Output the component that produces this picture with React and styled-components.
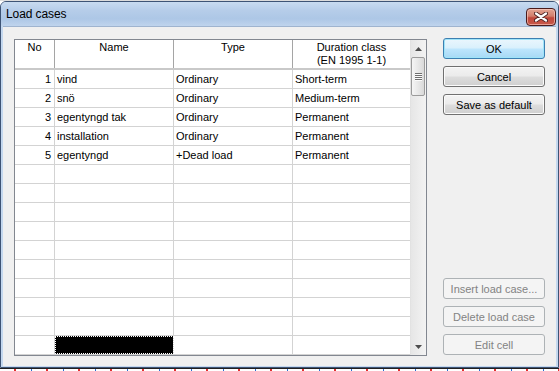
import React from 'react';
import styled, {createGlobalStyle, css} from 'styled-components';

const GlobalStyle = createGlobalStyle`
  html, body {
    margin: 0;
    padding: 0;
    background: #ffffff;
  }
  body {
    font-family: "Liberation Sans", "DejaVu Sans", Arial, sans-serif;
    font-size: 11px;
    color: #000;
  }
`;

const rows = [
  {no: 1, name: 'vind', type: 'Ordinary', duration: 'Short-term'},
  {no: 2, name: 'snö', type: 'Ordinary', duration: 'Medium-term'},
  {no: 3, name: 'egentyngd tak', type: 'Ordinary', duration: 'Permanent'},
  {no: 4, name: 'installation', type: 'Ordinary', duration: 'Permanent'},
  {no: 5, name: 'egentyngd', type: '+Dead load', duration: 'Permanent'},
];
const TOTAL_ROWS = 15;
const COLUMNS = '40px 119px 119px 118px';

const Desktop = styled.div`
  width: 559px;
  height: 371px;
  display: flex;
  flex-direction: column;
  background: linear-gradient(#dcdcdc 0, #dcdcdc 1px, #fff 1px);
  padding-top: 1px;
  box-sizing: border-box;
  overflow: hidden;
`;

const Window = styled.div`
  display: flex;
  flex-direction: column;
  height: 367px;
  box-sizing: border-box;
  border: 1px solid #3e5475;
  border-radius: 6px 6px 0 0;
  padding: 0 2px 1px;
  background: #c4d8ef;
`;

const TitleBar = styled.div`
  height: 24px;
  display: flex;
  align-items: center;
  justify-content: space-between;
  padding: 0 2px 0 5px;
  margin: 0 -2px;
  border-radius: 5px 5px 0 0;
  background: linear-gradient(#c8dbf0 0%, #b6cde9 35%, #adc7e6 70%, #bfd4ed 100%);
`;

const Title = styled.span`
  font-size: 12px;
  color: #000;
  letter-spacing: -0.1px;
`;

const CloseButton = styled.div`
  width: 30px;
  height: 18px;
  margin-top: 5px;
  box-sizing: border-box;
  border: 1px solid #4a1c1c;
  border-radius: 4px;
  background: linear-gradient(#e3a594 0%, #d27e6c 45%, #c0483c 55%, #c8594a 100%);
  display: flex;
  align-items: center;
  justify-content: center;
  box-shadow: inset 0 0 0 1px rgba(255, 210, 200, 0.6);
`;

const Client = styled.div`
  flex: 1;
  display: flex;
  gap: 16px;
  padding: 11px 11px 10px 11px;
  background: #f0f0f0;
  border-top: 1px solid #9fb4cf;
`;

const Grid = styled.div`
  margin-top: 1px;
  width: 413px;
  height: 317px;
  box-sizing: border-box;
  border: 1px solid #828790;
  display: flex;
  background: #fff;
`;

const Table = styled.div`
  width: 396px;
  display: flex;
  flex-direction: column;
  overflow: hidden;
`;

const HeaderRow = styled.div`
  display: grid;
  grid-template-columns: ${COLUMNS};
  height: 28px;
  border-bottom: 2px solid #c9c9c9;
  background: #fff;
`;

const HeaderCell = styled.div`
  text-align: center;
  line-height: 13px;
  padding-top: 1px;
  border-right: 1px solid ${p => (p.$last ? 'transparent' : '#a5a5a5')};
`;

const Row = styled.div`
  display: grid;
  grid-template-columns: ${COLUMNS};
  height: 19px;
  box-sizing: border-box;
  border-bottom: 1px solid #d3d3d3;
  flex-shrink: 0;
`;

const Cell = styled.div`
  line-height: 18px;
  padding: 0 2px;
  white-space: nowrap;
  overflow: hidden;
  border-right: 1px solid ${p => (p.$last ? 'transparent' : '#d3d3d3')};
  text-align: ${p => (p.$right ? 'right' : 'left')};
  ${p => p.$right && css`padding-right: 3px;`}
  ${p =>
    p.$selected &&
    css`
      background: #000;
      outline: 1px dotted #fff;
      outline-offset: -1px;
    `}
`;

const Scrollbar = styled.div`
  width: 15px;
  display: flex;
  flex-direction: column;
  background: linear-gradient(90deg, #e6e6e6, #f3f3f3);
  border-left: 1px solid #e2e2e2;
`;

const ArrowButton = styled.div`
  height: 17px;
  display: flex;
  align-items: center;
  justify-content: center;
`;

const Track = styled.div`
  flex: 1;
`;

const Thumb = styled.div`
  height: 39px;
  margin: 0 1px 0 0;
  box-sizing: border-box;
  border: 1px solid #9b9b9b;
  border-radius: 2px;
  background: linear-gradient(90deg, #f5f5f5 0%, #e8e8e8 50%, #d9d9d9 100%);
  display: flex;
  flex-direction: column;
  align-items: center;
  justify-content: center;
  gap: 1px;
`;

const Grip = styled.div`
  width: 7px;
  height: 1px;
  background: #6e6e6e;
  box-shadow: 0 1px 0 #fbfbfb;
`;

const ButtonColumn = styled.div`
  width: 102px;
  display: flex;
  flex-direction: column;
  justify-content: space-between;
  padding-bottom: 1px;
`;

const ButtonGroup = styled.div`
  display: flex;
  flex-direction: column;
  gap: 7px;
`;

const Button = styled.div`
  height: 21px;
  box-sizing: border-box;
  border: 1px solid #707070;
  border-radius: 3px;
  display: flex;
  align-items: center;
  justify-content: center;
  font-size: 11px;
  color: #000;
  background: linear-gradient(#f3f3f3 0%, #ebebeb 48%, #dddddd 52%, #cfcfcf 100%);
  box-shadow: inset 0 0 0 1px #fbfbfb;
  ${p =>
    p.$default &&
    css`
      border-color: #3c7fb1;
      background: linear-gradient(#eaf6fd 0%, #d9f0fc 48%, #bee6fd 52%, #a7d9f5 100%);
      box-shadow: inset 0 0 0 1px #9fe4f9;
    `}
  ${p =>
    p.$disabled &&
    css`
      border-color: #adb2b5;
      background: #f4f4f4;
      color: #838383;
      box-shadow: none;
    `}
`;

const Strip = styled.div`
  flex: 1;
  border-top: 1px solid #202020;
  background: repeating-linear-gradient(90deg, #fff 0 14px, #e03030 14px 16px, #fff 16px 31px, #2a6ad0 31px 32px);
`;

const CloseIcon = () => (
  <svg width="14" height="10" viewBox="0 0 14 10">
    <path d="M2 1.5 L12 8.5 M12 1.5 L2 8.5" stroke="#4b2222" strokeWidth="4" strokeLinecap="round" />
    <path d="M2 1.5 L12 8.5 M12 1.5 L2 8.5" stroke="#ffffff" strokeWidth="2.2" strokeLinecap="round" />
  </svg>
);

const Arrow = ({down}) => (
  <svg width="7" height="4" viewBox="0 0 7 4">
    <path d={down ? 'M0 0 H7 L3.5 4 Z' : 'M0 4 H7 L3.5 0 Z'} fill="#4d4d4d" />
  </svg>
);

export default function App() {
  const bodyRows = Array.from({length: TOTAL_ROWS}, (_, i) => rows[i] || null);

  return (
    <>
      <GlobalStyle />
      <Desktop>
        <Window>
          <TitleBar>
            <Title>Load cases</Title>
            <CloseButton>
              <CloseIcon />
            </CloseButton>
          </TitleBar>
          <Client>
            <Grid>
              <Table>
                <HeaderRow>
                  <HeaderCell>No</HeaderCell>
                  <HeaderCell>Name</HeaderCell>
                  <HeaderCell>Type</HeaderCell>
                  <HeaderCell $last>
                    Duration class
                    <br />
                    (EN 1995 1-1)
                  </HeaderCell>
                </HeaderRow>
                {bodyRows.map((r, i) => (
                  <Row key={i}>
                    <Cell $right>{r ? r.no : ''}</Cell>
                    <Cell $selected={i === TOTAL_ROWS - 1}>{r ? r.name : ''}</Cell>
                    <Cell>{r ? r.type : ''}</Cell>
                    <Cell $last>{r ? r.duration : ''}</Cell>
                  </Row>
                ))}
              </Table>
              <Scrollbar>
                <ArrowButton>
                  <Arrow />
                </ArrowButton>
                <Thumb>
                  <Grip />
                  <Grip />
                  <Grip />
                  <Grip />
                </Thumb>
                <Track />
                <ArrowButton>
                  <Arrow down />
                </ArrowButton>
              </Scrollbar>
            </Grid>
            <ButtonColumn>
              <ButtonGroup>
                <Button $default>OK</Button>
                <Button>Cancel</Button>
                <Button>Save as default</Button>
              </ButtonGroup>
              <ButtonGroup>
                <Button $disabled>Insert load case...</Button>
                <Button $disabled>Delete load case</Button>
                <Button $disabled>Edit cell</Button>
              </ButtonGroup>
            </ButtonColumn>
          </Client>
        </Window>
        <Strip />
      </Desktop>
    </>
  );
}
